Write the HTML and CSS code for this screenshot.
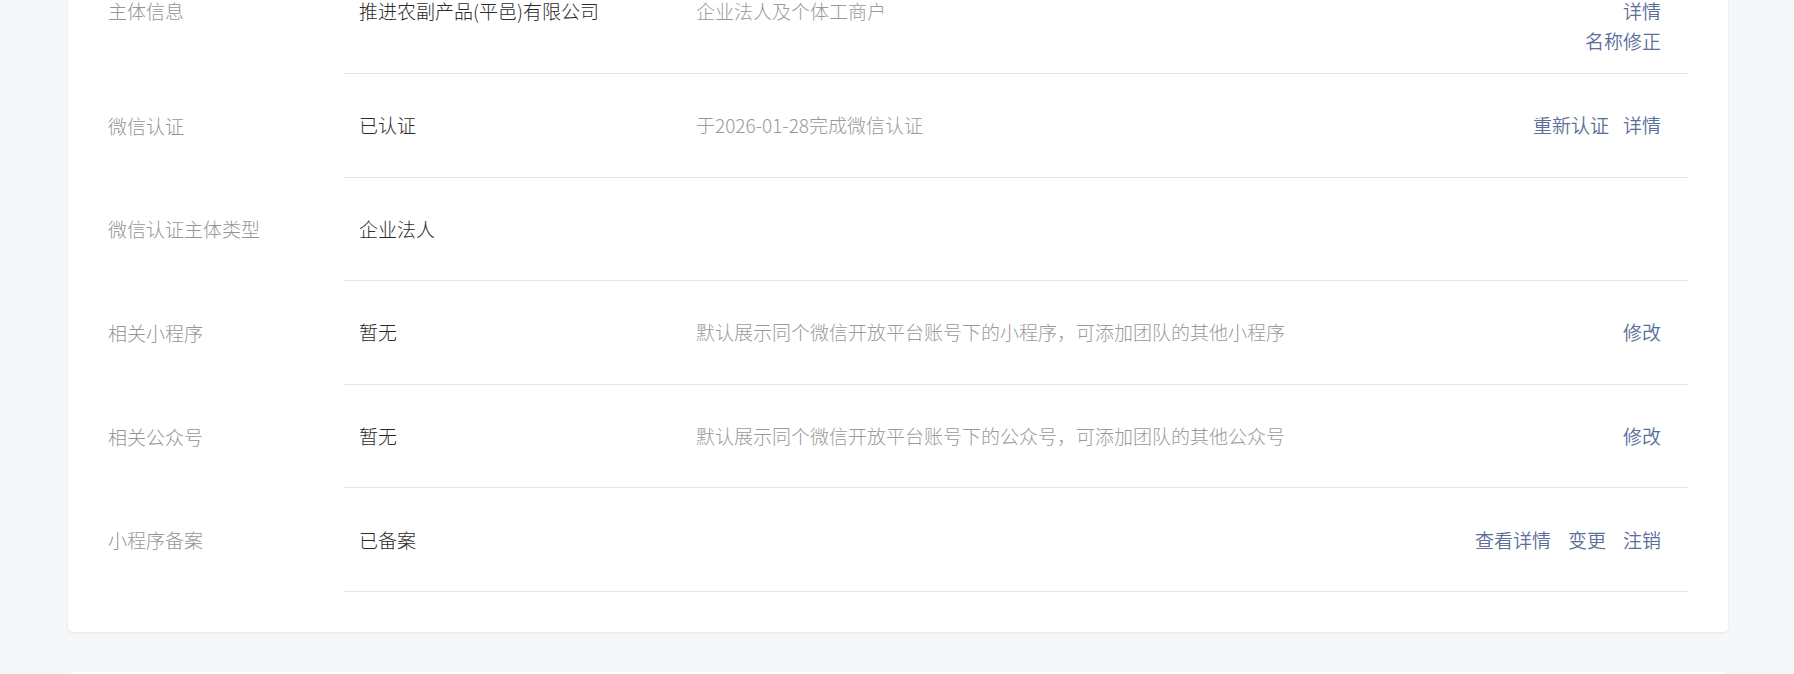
FILE: index.html
```html
<!DOCTYPE html>
<html lang="zh-CN">
<head>
    <meta charset="UTF-8">
    <meta name="viewport" content="width=device-width, initial-scale=1.0">
    <title>基本设置</title>
    <link rel="stylesheet" href="styles.css">
</head>
<body>
    <div class="page">
        <div class="card">
            <div class="row row-top">
                <div class="row-label">主体信息</div>
                <div class="row-body">
                    <div class="row-value">推进农副产品(平邑)有限公司</div>
                    <div class="row-desc">企业法人及个体工商户</div>
                    <div class="row-actions stacked">
                        <a href="#">详情</a>
                        <a href="#">名称修正</a>
                    </div>
                </div>
            </div>
            <div class="row">
                <div class="row-label">微信认证</div>
                <div class="row-body">
                    <div class="row-value">已认证</div>
                    <div class="row-desc">于2026-01-28完成微信认证</div>
                    <div class="row-actions">
                        <a href="#">重新认证</a>
                        <a href="#">详情</a>
                    </div>
                </div>
            </div>
            <div class="row">
                <div class="row-label">微信认证主体类型</div>
                <div class="row-body">
                    <div class="row-value">企业法人</div>
                    <div class="row-desc"></div>
                </div>
            </div>
            <div class="row">
                <div class="row-label">相关小程序</div>
                <div class="row-body">
                    <div class="row-value">暂无</div>
                    <div class="row-desc">默认展示同个微信开放平台账号下的小程序，可添加团队的其他小程序</div>
                    <div class="row-actions">
                        <a href="#">修改</a>
                    </div>
                </div>
            </div>
            <div class="row">
                <div class="row-label">相关公众号</div>
                <div class="row-body">
                    <div class="row-value">暂无</div>
                    <div class="row-desc">默认展示同个微信开放平台账号下的公众号，可添加团队的其他公众号</div>
                    <div class="row-actions">
                        <a href="#">修改</a>
                    </div>
                </div>
            </div>
            <div class="row">
                <div class="row-label">小程序备案</div>
                <div class="row-body">
                    <div class="row-value">已备案</div>
                    <div class="row-desc"></div>
                    <div class="row-actions wide">
                        <a href="#">查看详情</a>
                        <a href="#">变更</a>
                        <a href="#">注销</a>
                    </div>
                </div>
            </div>
        </div>
        <div class="card card-next"></div>
    </div>
</body>
</html>
```

FILE: styles.css
```css
body {
    margin: 0;
    background: #f6f7f9;
    font-family: "Noto Sans CJK SC", "Noto Sans", sans-serif;
    font-size: 19px;
    font-weight: 300;
    line-height: 30px;
    color: #353535;
}
.page {
    margin: -42px 66px 0 68px;
}
.card {
    background: #fff;
    border-radius: 5px;
    box-shadow: 0 1px 3px rgba(0, 0, 0, 0.08);
    padding: 0 40px 40px;
}
.card-next {
    margin-top: 40px;
    height: 300px;
    padding: 0;
}
.row {
    display: flex;
    align-items: center;
}
.row-label {
    width: 236px;
    flex-shrink: 0;
    color: #959595;
}
.row-body {
    flex: 1;
    display: flex;
    align-items: center;
    box-sizing: border-box;
    height: 103.6px;
    padding: 0 27px 0 15px;
    border-bottom: 1px solid #e6e6e9;
}
.row-value {
    width: 337px;
    flex-shrink: 0;
    color: #2a2a2a;
}
.row-desc {
    flex: 1;
    color: #9a9a9a;
}
.row-actions {
    display: flex;
    gap: 14px;
}
.row-actions.wide {
    gap: 17px;
}
.row-actions.stacked {
    flex-direction: column;
    align-items: flex-end;
    gap: 0;
}
.row-actions a {
    color: #5a6e98;
    font-weight: 350;
    text-decoration: none;
}
.row-top {
    align-items: flex-start;
}
.row-top .row-label {
    padding-top: 38px;
}
.row-top .row-body {
    height: auto;
    align-items: flex-start;
    padding-top: 38px;
    padding-bottom: 17px;
}
```
